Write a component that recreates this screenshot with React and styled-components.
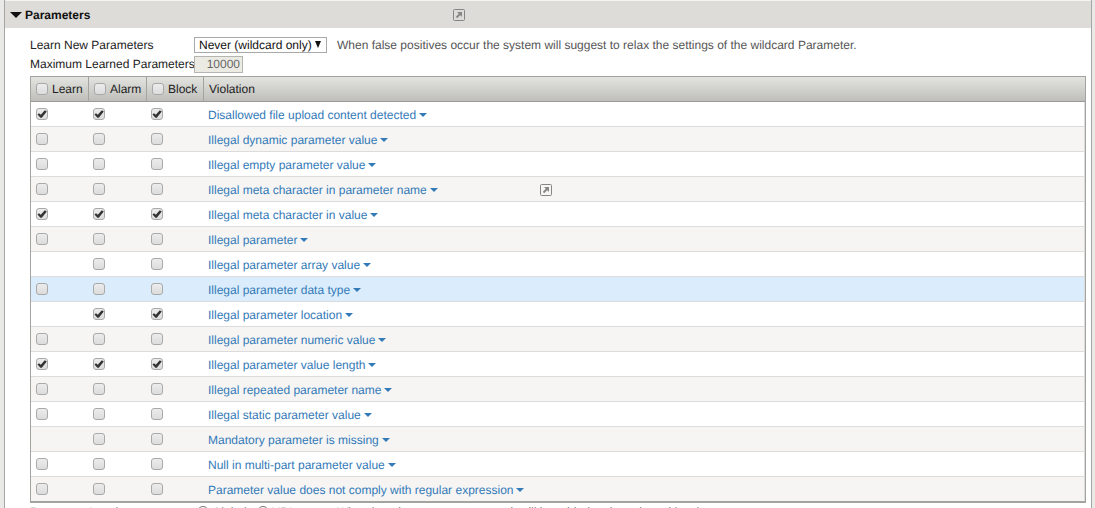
import React, { useState } from "react";
import styled, { createGlobalStyle } from "styled-components";

const Global = createGlobalStyle`
  * { box-sizing: border-box; }
  html, body { margin: 0; height: 100%; overflow: hidden; background: #e9e9e7; }
  body, input, select, button {
    font-family: "Liberation Sans", Arial, sans-serif;
    font-size: 12px;
    text-rendering: geometricPrecision;
  }
`;

const Page = styled.main`
  height: 100vh;
  overflow: hidden;
  padding: 0 3px 0 4px;
  color: #222;
`;

const Panel = styled.section`
  min-height: 100%;
  background: #fff;
  border: solid #a6a6a4;
  border-width: 0 1px;
`;

const PanelHeader = styled.header`
  display: flex;
  align-items: center;
  height: 28px;
  padding-left: 5px;
  background: #dddcd8;
  border-top: 1px solid #f4f4f2;
`;

const Title = styled.h1`
  display: flex;
  align-items: center;
  gap: 3px;
  flex: 0 0 443px;
  margin: 0;
  padding-top: 1px;
  font-size: 12px;
  line-height: 16px;
  color: #111;
`;

const Toggle = styled.span`
  border: solid transparent;
  border-width: 6px 6px 0;
  border-top-color: #111;
`;

const Content = styled.div`
  padding: 9px 5px 0 25px;
`;

const Field = styled.div`
  display: flex;
  align-items: center;
  height: ${(p) => (p.$short ? 18 : 16)}px;
  margin-bottom: ${(p) => (p.$short ? 3 : 2)}px;
  white-space: nowrap;
`;

const FieldLabel = styled.label`
  flex: 0 0 164px;
  min-width: 0;
`;

const SelectWrap = styled.span`
  position: relative;
  display: flex;

  svg { position: absolute; right: 5px; top: 4px; pointer-events: none; }
`;

const Select = styled.select`
  appearance: none;
  width: 133px;
  height: 16px;
  padding: 0 4px;
  border: 1px solid #a9a9a9;
  border-radius: 0;
  background: #fff;
  color: #111;
`;

const Hint = styled.span`
  margin-left: 10px;
  color: #555;
`;

const NumberBox = styled.input`
  width: 49px;
  height: 17px;
  padding: 0 2px;
  border: 1px solid #b4b4b0;
  background: #ebebe4;
  color: #666;
  text-align: right;
`;

const Grid = styled.table`
  width: 100%;
  table-layout: fixed;
  border-collapse: separate;
  border-spacing: 0;
  border: 1px solid #a3a3a0;
  border-bottom-width: 2px;
`;

const HeadCell = styled.th`
  width: ${(p) => p.$width || "auto"};
  height: 25px;
  padding: 0 5px;
  border-bottom: 1px solid #9a9a98;
  border-left: ${(p) => (p.$first ? "0" : "1px solid #a3a3a0")};
  background: linear-gradient(#e3e3df, #bfbeba);
  font-weight: normal;
  text-align: left;
  white-space: nowrap;

  label { display: flex; align-items: center; gap: 4px; }
`;

const Row = styled.tr`
  background: ${(p) => (p.$active ? "#dbedfc" : "#fff")};
  &:nth-child(even) { background: ${(p) => (p.$active ? "#dbedfc" : "#f6f5f4")}; }
`;

const Cell = styled.td`
  height: 25px;
  padding: 0 5px;
  border-bottom: 1px solid #dcdcdc;
  &:last-child { border-right: 1px solid #dcdcdc; }
  ${Row}:last-child & { height: 24px; border-bottom: 0; }
`;

const Check = styled.input`
  appearance: none;
  display: grid;
  flex: none;
  place-items: center;
  width: 12px;
  height: 12px;
  margin: 0;
  border: 1px solid #a9a9a9;
  border-radius: 3px;
  background: linear-gradient(#ececec, #dcdcdc);
  &:checked::before {
    content: "";
    width: 10px;
    height: 8px;
    background: #333;
    clip-path: polygon(5% 56%, 20% 40%, 38% 58%, 78% 2%, 98% 18%, 48% 98%, 34% 98%);
  }
`;

const ViolationCell = styled.div`
  display: flex;
  align-items: center;
  padding-top: 1px;
`;

const Violation = styled.button`
  display: flex;
  align-items: center;
  gap: 3px;
  padding: 0;
  border: 0;
  background: none;
  color: #337ab7;
  line-height: 16px;
  white-space: nowrap;

  &::after {
    content: "";
    border: solid transparent;
    border-width: 4px 4px 0;
    border-top-color: #337ab7;
  }
`;

const IconButton = styled.button`
  display: flex;
  margin: 0 0 0 ${(p) => p.$gap || 0}px;
  padding: 0;
  border: 0;
  background: none;
`;

const LevelField = styled.div`
  display: flex;
  align-items: center;
  height: 16px;
  margin-top: 1px;
  line-height: 16px;
  white-space: nowrap;
  color: #555;
`;

const LevelLabel = styled.span`
  flex: 0 0 164px;
`;

const RadioGroup = styled.div`
  display: flex;
  gap: 10px;
  flex: 0 0 133px;
  padding-left: 3px;

  label { display: flex; align-items: center; gap: 3px; }
  input { width: 12px; height: 12px; margin: 0; }
`;

function OpenButton({ label, gap }) {
  return (
    <IconButton aria-label={label} $gap={gap}>
      <svg width="12" height="12" viewBox="0 0 12 12" fill="none" stroke="#858585">
        <rect x="0.5" y="0.5" width="11" height="11" rx="1" />
        <path d="M3.5 8.5 7 5" strokeWidth="1.8" />
        <path d="M4 3h5v5z" fill="#858585" stroke="none" />
      </svg>
    </IconButton>
  );
}

const rows = [
  ["Disallowed file upload content detected", true, true, true],
  ["Illegal dynamic parameter value", false, false, false],
  ["Illegal empty parameter value", false, false, false],
  ["Illegal meta character in parameter name", false, false, false],
  ["Illegal meta character in value", true, true, true],
  ["Illegal parameter", false, false, false],
  ["Illegal parameter array value", null, false, false],
  ["Illegal parameter data type", false, false, false],
  ["Illegal parameter location", null, true, true],
  ["Illegal parameter numeric value", false, false, false],
  ["Illegal parameter value length", true, true, true],
  ["Illegal repeated parameter name", false, false, false],
  ["Illegal static parameter value", false, false, false],
  ["Mandatory parameter is missing", null, false, false],
  ["Null in multi-part parameter value", false, false, false],
  ["Parameter value does not comply with regular expression", false, false, false],
];

const columns = [["Learn", "57px"], ["Alarm", "58px"], ["Block", "57px"]];

export default function App() {
  const [mode, setMode] = useState("never");
  return (
    <Page>
      <Global />
      <Panel>
        <PanelHeader>
          <Title><Toggle />Parameters</Title>
          <OpenButton label="Open parameters" />
        </PanelHeader>
        <Content>
          <Field>
            <FieldLabel htmlFor="mode">Learn New Parameters</FieldLabel>
            <SelectWrap>
              <Select id="mode" value={mode} onChange={(e) => setMode(e.target.value)}>
                <option value="never">Never (wildcard only)</option>
              </Select>
              <svg width="8" height="8" viewBox="0 0 8 8"><path d="M1 0h6L4 7z" fill="#111" /></svg>
            </SelectWrap>
            <Hint>When false positives occur the system will suggest to relax the settings of the wildcard Parameter.</Hint>
          </Field>
          <Field $short>
            <FieldLabel htmlFor="max">Maximum Learned Parameters</FieldLabel>
            <NumberBox id="max" defaultValue="10000" disabled />
          </Field>
          <Grid>
            <thead>
              <tr>
                {columns.map(([name, width], i) => (
                  <HeadCell key={name} $width={width} $first={i === 0}>
                    <label><Check type="checkbox" />{name}</label>
                  </HeadCell>
                ))}
                <HeadCell>Violation</HeadCell>
              </tr>
            </thead>
            <tbody>
              {rows.map(([name, ...checks], r) => (
                <Row key={name} $active={r === 7}>
                  {checks.map((on, i) => (
                    <Cell key={i}>
                      {on !== null && <Check type="checkbox" defaultChecked={on} aria-label={`${columns[i][0]}: ${name}`} />}
                    </Cell>
                  ))}
                  <Cell>
                    <ViolationCell>
                      <Violation>{name}</Violation>
                      {r === 3 && <OpenButton label="Open details" gap={102} />}
                    </ViolationCell>
                  </Cell>
                </Row>
              ))}
            </tbody>
          </Grid>
          <LevelField>
            <LevelLabel>Parameter Level</LevelLabel>
            <RadioGroup>
              <label><input type="radio" name="level" />Global</label>
              <label><input type="radio" name="level" />URL</label>
            </RadioGroup>
            <Hint>When learning new parameters, it will be added at the selected level.</Hint>
          </LevelField>
        </Content>
      </Panel>
    </Page>
  );
}
